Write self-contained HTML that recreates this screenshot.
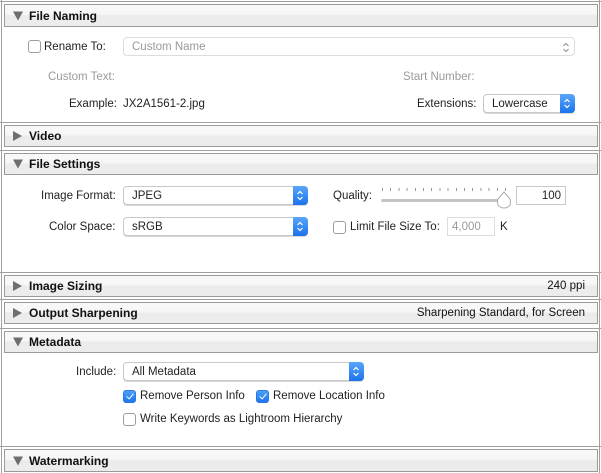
<!DOCTYPE html>
<html><head><meta charset="utf-8"><style>
*{box-sizing:border-box;margin:0;padding:0}
body{width:601px;height:473px;background:#fff;position:relative;overflow:hidden;font-family:"Liberation Sans",sans-serif;font-size:11.5px;color:#222}
.a{position:absolute;white-space:nowrap;line-height:14px}
.t1{margin-top:1px}
.vl{position:absolute;top:0;bottom:0;width:1px;background:#a0a0a0}
.sep{position:absolute;left:0;right:0;height:1px;background:#a0a0a0}
.hd{position:absolute;left:4px;width:594px;border:1px solid #9a9a9a;background:linear-gradient(#f9f9f9 0,#f6f6f6 45%,#ebebeb 50%,#ececec 100%);font-weight:bold;font-size:12px;color:#111}
.hd .t{position:absolute;left:24px;top:50%;transform:translateY(-50%)}
.hd .r{position:absolute;right:12px;top:50%;transform:translateY(-50%);font-weight:normal;font-size:11.5px}
.tri{position:absolute;left:8px;top:50%;transform:translateY(-50%);width:0;height:0}
.down{border-left:5px solid transparent;border-right:5px solid transparent;border-top:9px solid #6e6e6e}
.right{border-top:5px solid transparent;border-bottom:5px solid transparent;border-left:9px solid #6e6e6e}
.pop{position:absolute;height:19px;border:1px solid #c8c8c8;border-radius:4px;background:#fff;padding-left:8px;line-height:19px;box-shadow:0 1px 0 #d8d8d8}
.pop .st{position:absolute;right:-1px;top:-1px;width:15px;height:19px;border-radius:0 4px 4px 0;background:linear-gradient(#5aa6fb,#1b72eb)}
.pop svg{position:absolute;left:3px;top:4px}
.cb{position:absolute;width:13px;height:13px;border:1px solid #9d9d9d;border-radius:3px;background:#fff}
.cb.on{background:linear-gradient(#4ea0fb,#1e74ec);border-color:#2a78e0}
.cb.on::after{content:"";position:absolute;left:3.5px;top:1px;width:3px;height:6px;border:solid #fff;border-width:0 1.6px 1.6px 0;transform:rotate(40deg)}
.g{color:#9a9a9a}
.box{position:absolute;border:1px solid #c8c8c8;background:#fff;height:19px;line-height:18px}
</style></head><body>
<div class="vl" style="left:1px"></div><div class="vl" style="left:599px"></div>
<div class="sep" style="top:1px"></div>
<div class="hd" style="top:4px;height:23px"><div class="tri down"></div><span class="t">File Naming</span></div>
<div class="cb" style="left:28px;top:40px"></div>
<div class="a" style="left:44px;top:40px">Rename To:</div>
<div class="pop g" style="left:123px;top:37px;width:452px;box-shadow:none;border-color:#ddd">Custom Name<svg style="left:auto;right:4px" width="8" height="11"><path d="M1.5 4 L4 1.5 L6.5 4 M1.5 7 L4 9.5 L6.5 7" fill="none" stroke="#999" stroke-width="1.2"/></svg></div>
<div class="a g" style="left:48px;top:70px">Custom Text:</div>
<div class="a g" style="left:403px;top:70px">Start Number:</div>
<div class="a" style="left:69px;top:97px">Example:</div>
<div class="a" style="left:123px;top:97px">JX2A1561-2.jpg</div>
<div class="a" style="left:417px;top:97px">Extensions:</div>
<div class="pop" style="left:483px;top:94px;width:92px">Lowercase<div class="st"><svg width="8" height="11"><path d="M1.5 4 L4 1.5 L6.5 4 M1.5 7 L4 9.5 L6.5 7" fill="none" stroke="#fff" stroke-width="1.2"/></svg></div></div>
<div class="sep" style="top:122px"></div>
<div class="hd" style="top:125px;height:22px"><div class="tri right"></div><span class="t">Video</span></div>
<div class="sep" style="top:150px"></div>
<div class="hd" style="top:153px;height:22px"><div class="tri down"></div><span class="t">File Settings</span></div>
<div class="a" style="left:41px;top:189px">Image Format:</div>
<div class="pop" style="left:123px;top:186px;width:185px">JPEG<div class="st"><svg width="8" height="11"><path d="M1.5 4 L4 1.5 L6.5 4 M1.5 7 L4 9.5 L6.5 7" fill="none" stroke="#fff" stroke-width="1.2"/></svg></div></div>
<div class="a" style="left:49px;top:220px">Color Space:</div>
<div class="pop" style="left:123px;top:217px;width:185px">sRGB<div class="st"><svg width="8" height="11"><path d="M1.5 4 L4 1.5 L6.5 4 M1.5 7 L4 9.5 L6.5 7" fill="none" stroke="#fff" stroke-width="1.2"/></svg></div></div>
<div class="a" style="left:333px;top:189px">Quality:</div>
<div class="a" style="left:381px;top:199px;width:124px;height:3px;background:#c4c4c4;border-radius:2px"></div>
<div class="a" style="left:382px;top:188px;width:124px;height:3px;background:repeating-linear-gradient(90deg,#999 0 1px,transparent 1px 8.2px)"></div>
<svg class="a" style="left:496px;top:191px" width="16" height="19"><path d="M8 1 L14 8 Q15 10 14 14 Q12 17 8 17 Q4 17 2 14 Q1 10 2 8 Z" fill="#fff" stroke="#aaa"/></svg>
<div class="box" style="left:516px;top:186px;width:50px;text-align:right;padding-right:4px">100</div>
<div class="cb" style="left:333px;top:221px"></div>
<div class="a" style="left:350px;top:220px">Limit File Size To:</div>
<div class="box g" style="left:447px;top:217px;width:48px;padding-left:4px;border-color:#ddd">4,000</div>
<div class="a" style="left:500px;top:220px">K</div>
<div class="sep" style="top:272px"></div>
<div class="hd" style="top:275px;height:22px"><div class="tri right"></div><span class="t">Image Sizing</span><span class="r">240 ppi</span></div>
<div class="sep" style="top:299px"></div>
<div class="hd" style="top:302px;height:22px"><div class="tri right"></div><span class="t">Output Sharpening</span><span class="r">Sharpening Standard, for Screen</span></div>
<div class="sep" style="top:328px"></div>
<div class="hd" style="top:331px;height:22px"><div class="tri down"></div><span class="t">Metadata</span></div>
<div class="a" style="left:76px;top:365px">Include:</div>
<div class="pop" style="left:123px;top:362px;width:241px">All Metadata<div class="st"><svg width="8" height="11"><path d="M1.5 4 L4 1.5 L6.5 4 M1.5 7 L4 9.5 L6.5 7" fill="none" stroke="#fff" stroke-width="1.2"/></svg></div></div>
<div class="cb on" style="left:123px;top:390px"></div>
<div class="a" style="left:140px;top:389px">Remove Person Info</div>
<div class="cb on" style="left:256px;top:390px"></div>
<div class="a" style="left:273px;top:389px">Remove Location Info</div>
<div class="cb" style="left:123px;top:413px"></div>
<div class="a" style="left:140px;top:412px">Write Keywords as Lightroom Hierarchy</div>
<div class="sep" style="top:446px"></div>
<div class="hd" style="top:449px;height:23px"><div class="tri down"></div><span class="t">Watermarking</span></div>
</body></html>
